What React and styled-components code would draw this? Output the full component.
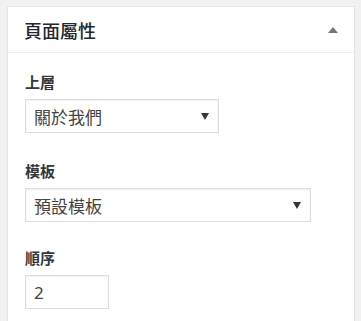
import React from "react";
import styled, { createGlobalStyle } from "styled-components";

const GlobalStyle = createGlobalStyle`
  html, body {
    margin: 0;
    padding: 0;
    background: #f1f1f1;
  }
  body {
    font-family: "Noto Sans CJK TC", "Noto Sans", "Liberation Sans", sans-serif;
    color: #23282d;
  }
`;

const Page = styled.div`
  padding: 6px 7px 0 7px;
  width: 361px;
  height: 321px;
  box-sizing: border-box;
  overflow: hidden;
`;

const Box = styled.div`
  width: 348px;
  background: #fff;
  border: 1px solid #e5e5e5;
  box-shadow: 0 1px 1px rgba(0, 0, 0, 0.04);
  box-sizing: border-box;
  min-height: 330px;
`;

const Header = styled.div`
  height: 45px;
  display: flex;
  align-items: center;
  justify-content: space-between;
  padding: 0 16px;
  border-bottom: 1px solid #eee;
`;

const Title = styled.h2`
  margin: 0;
  font-size: 18px;
  font-weight: 500;
  color: #23282d;
`;

const Toggle = styled.span`
  width: 0;
  height: 0;
  border-left: 5px solid transparent;
  border-right: 5px solid transparent;
  border-bottom: 6px solid #72777c;
`;

const Inside = styled.div`
  padding: 18px 16px 0 17px;
  display: flex;
  flex-direction: column;
`;

const Label = styled.p`
  margin: 0 0 6px 0;
  font-size: 15px;
  line-height: 22px;
  font-weight: 700;
  color: #32373c;
`;

const Field = styled.div`
  position: relative;
  width: ${(p) => p.$width}px;
  height: 34px;
  margin-bottom: ${(p) => p.$gap}px;
`;

const Select = styled.select`
  appearance: none;
  -webkit-appearance: none;
  width: 100%;
  height: 100%;
  box-sizing: border-box;
  border: 1px solid #ddd;
  box-shadow: inset 0 1px 2px rgba(0, 0, 0, 0.07);
  background: #fff;
  padding: 0 24px 0 8px;
  font-family: inherit;
  font-size: 17px;
  font-weight: 400;
  color: #444;
  outline: none;
`;

const Arrow = styled.span`
  position: absolute;
  right: 10px;
  top: 14px;
  width: 0;
  height: 0;
  border-left: 4px solid transparent;
  border-right: 4px solid transparent;
  border-top: 7px solid #32373c;
  pointer-events: none;
`;

const NumberInput = styled.input`
  width: 84px;
  height: 34px;
  box-sizing: border-box;
  border: 1px solid #ddd;
  box-shadow: inset 0 1px 2px rgba(0, 0, 0, 0.07);
  padding: 0 8px;
  font-family: "Noto Sans", "Liberation Sans", sans-serif;
  font-size: 17px;
  color: #444;
  outline: none;
`;

export default function App() {
  return (
    <Page>
      <GlobalStyle />
      <Box>
        <Header>
          <Title>頁面屬性</Title>
          <Toggle />
        </Header>
        <Inside>
          <Label>上層</Label>
          <Field $width={194} $gap={27}>
            <Select defaultValue="about">
              <option value="about">關於我們</option>
            </Select>
            <Arrow />
          </Field>
          <Label>模板</Label>
          <Field $width={286} $gap={25}>
            <Select defaultValue="default">
              <option value="default">預設模板</option>
            </Select>
            <Arrow />
          </Field>
          <Label>順序</Label>
          <NumberInput type="text" defaultValue="2" readOnly />
        </Inside>
      </Box>
    </Page>
  );
}
